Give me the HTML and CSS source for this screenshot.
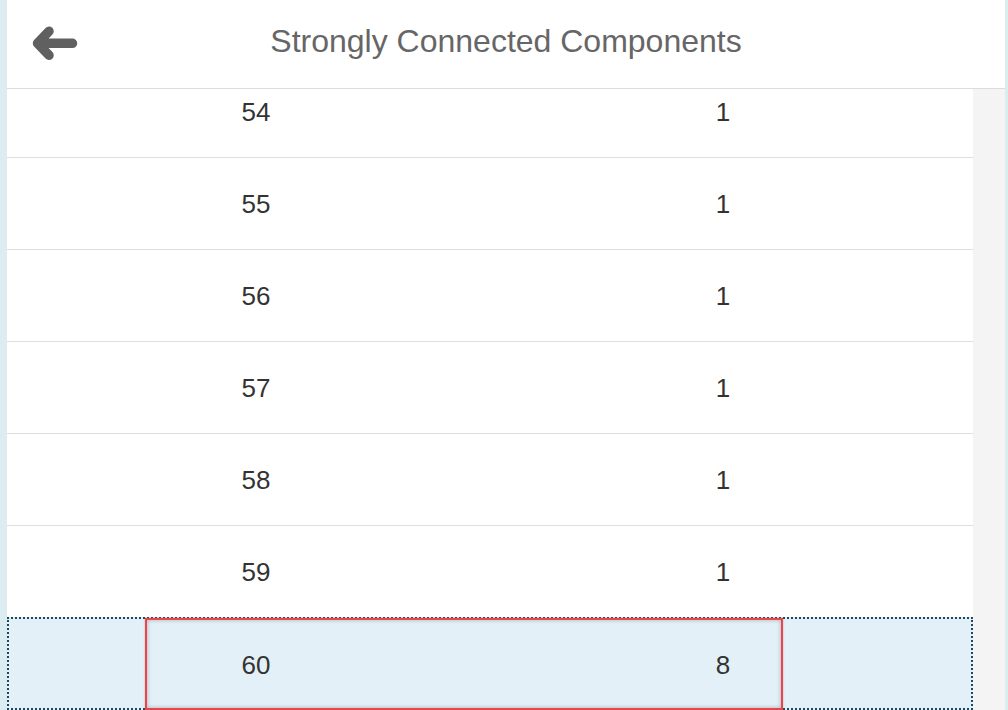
FILE: index.html
```html
<!DOCTYPE html>
<html lang="en">
<head>
<meta charset="utf-8">
<title>Strongly Connected Components</title>
<link rel="stylesheet" href="styles.css">
</head>
<body>
<div class="app">
  <header class="header">
    <button class="back" aria-label="Back">
      <svg width="50" height="40" viewBox="0 0 50 40">
        <path d="M18 7.3 L6.5 19.3 L18 31.3 M6.5 19.3 L41.5 19.3" fill="none" stroke="#606060" stroke-width="9.5" stroke-linecap="round" stroke-linejoin="round"/>
      </svg>
    </button>
    <h1 class="title">Strongly Connected Components</h1>
    <div class="spacer"></div>
  </header>
  <div class="content">
    <div class="list">
      <div class="row first"><div class="cells"><span>54</span><span></span><span>1</span></div></div>
      <div class="row"><div class="cells"><span>55</span><span></span><span>1</span></div></div>
      <div class="row"><div class="cells"><span>56</span><span></span><span>1</span></div></div>
      <div class="row"><div class="cells"><span>57</span><span></span><span>1</span></div></div>
      <div class="row"><div class="cells"><span>58</span><span></span><span>1</span></div></div>
      <div class="row"><div class="cells"><span>59</span><span></span><span>1</span></div></div>
      <div class="row selected"><div class="cells marked"><span>60</span><span></span><span>8</span></div></div>
    </div>
    <div class="scrollbar"></div>
  </div>
</div>
</body>
</html>
```

FILE: styles.css
```css
* { box-sizing: border-box; }
html, body { height: 100%; }
body {
  margin: 0;
  background: #dcedf2;
  font-family: "Liberation Sans", Arial, sans-serif;
  overflow: hidden;
}
.app {
  margin: 0 3px 0 7px;
  height: 710px;
  display: flex;
  flex-direction: column;
}
.header {
  height: 89px;
  flex: none;
  background: #fff;
  border-bottom: 1px solid #dcdcdc;
  display: grid;
  grid-template-columns: 1fr auto 1fr;
  align-items: center;
}
.back {
  justify-self: start;
  margin-left: 24px;
  padding: 0;
  border: 0;
  background: none;
  width: 50px;
  height: 40px;
  display: block;
}
.back svg { display: block; }
.title {
  margin: 0 0 5px;
  font-weight: normal;
  font-size: 32px;
  color: #666;
}
.content {
  flex: 1;
  display: flex;
  overflow: hidden;
}
.list {
  flex: 1;
  background: #fff;
  overflow: hidden;
}
.scrollbar {
  width: 32px;
  flex: none;
  background: #f4f4f4;
}
.row {
  height: 92px;
  border-bottom: 1px solid #dedede;
  display: grid;
  grid-template-columns: 138px 638px 1fr;
  font-size: 26px;
  color: #333;
}
.row.first { margin-top: -23px; }
.cells {
  grid-column: 2;
  display: grid;
  grid-template-columns: 218px 1fr 116px;
  align-items: center;
  border: 2px solid transparent;
  padding-top: 2px;
}
.cells span { text-align: center; }
.row.selected {
  margin-top: -1px;
  height: 93px;
  background: #e3f0f8;
  border: 2px dotted #1b4965;
  grid-template-columns: 136px 638px 1fr;
}
.cells.marked {
  border: 2px solid #e6474a;
  box-shadow: inset 0 0 4px rgba(0, 0, 0, 0.28), 0 0 2px rgba(230, 71, 74, 0.4);
  margin-top: -1px;
  margin-bottom: -2px;
}
```
